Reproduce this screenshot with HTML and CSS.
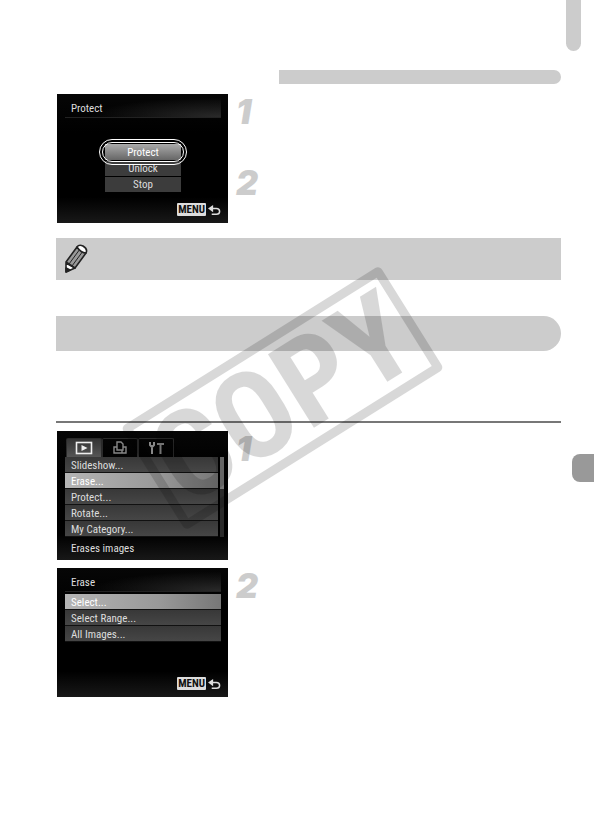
FILE: index.html
```
<!DOCTYPE html>
<html lang="en">
  <head>
    <meta charset="UTF-8" />
    <meta name="viewport" content="width=device-width, initial-scale=1.0" />
    <title>Protect and Erase</title>
    <link rel="stylesheet" href="styles.css">
  </head>
  <body>
    <div class="top-tab"></div>
    <main>
      <div class="section-bar"></div>

      <section class="step-row">
        <div class="screen">
          <h2 class="screen-title">Protect</h2>
          <div class="choices">
            <button class="choice selected">Protect</button>
            <button class="choice">Unlock</button>
            <button class="choice">Stop</button>
          </div>
          <div class="menu-key">
            <span class="key">MENU</span>
            <svg class="back" viewBox="0 0 14 12">
              <path class="head" d="M0 4.5 L5.5 0.5 V8.5 Z" />
              <path d="M4 4.5 H9 Q12.5 4.5 12.5 7.5 Q12.5 10.5 9 10.5 H4" />
            </svg>
          </div>
        </div>
        <ol class="steps">
          <li>1</li>
          <li>2</li>
        </ol>
      </section>

      <aside class="note">
        <svg class="pencil" viewBox="0 0 24 30">
          <path class="wood" d="M2 19 L2 28 L11 24 Z" />
          <path class="shaft" d="M2 18 L13 3 L22 9 L11 24 Z" />
          <path class="line" d="M5 20 L16 5 M8 22 L19 7" />
          <path class="cap" d="M13 3 Q15 0 19 2 Q24 5 22 9 Q17 9 13 3 Z" />
          <path class="lead" d="M2 24 L2 28 L6 26 Z" />
        </svg>
      </aside>

      <div class="chapter-bar"></div>
      <hr class="rule" />

      <section class="step-row">
        <div class="screen tabbed">
          <nav class="tabs">
            <button class="tab active" aria-label="Playback">
              <svg viewBox="0 0 18 14">
                <rect x="1.5" y="1.5" width="15" height="11" />
                <path class="fill" d="M6.5 4 L12.5 7 L6.5 10 Z" />
              </svg>
            </button>
            <button class="tab" aria-label="Print">
              <svg viewBox="0 0 18 14">
                <path d="M6 9 V1 H10 L12 3 V9 Z M6 6 H3 V12 H13 M12 6 H15 V12 H11 V9" />
              </svg>
            </button>
            <button class="tab" aria-label="Settings">
              <svg viewBox="0 0 18 14">
                <path class="tool" d="M3 1 V4 L5 6 L7 4 V1 M5 5 V13 M10 3 H17 M13.5 3 V13" />
              </svg>
            </button>
          </nav>
          <div class="list-area">
            <ul class="menu">
              <li><button>Slideshow...</button></li>
              <li><button class="selected">Erase...</button></li>
              <li><button>Protect...</button></li>
              <li><button>Rotate...</button></li>
              <li><button>My Category...</button></li>
            </ul>
            <div class="scroll"></div>
          </div>
          <p class="hint">Erases images</p>
        </div>
        <ol class="steps">
          <li>1</li>
        </ol>
      </section>

      <section class="step-row last">
        <div class="screen">
          <h2 class="screen-title">Erase</h2>
          <ul class="menu short">
            <li><button class="selected">Select...</button></li>
            <li><button>Select Range...</button></li>
            <li><button>All Images...</button></li>
          </ul>
          <div class="menu-key">
            <span class="key">MENU</span>
            <svg class="back" viewBox="0 0 14 12">
              <path class="head" d="M0 4.5 L5.5 0.5 V8.5 Z" />
              <path d="M4 4.5 H9 Q12.5 4.5 12.5 7.5 Q12.5 10.5 9 10.5 H4" />
            </svg>
          </div>
        </div>
        <ol class="steps">
          <li>2</li>
        </ol>
      </section>
    </main>
    <div class="side-tab"></div>
    <div class="stamp">COPY</div>
  </body>
</html>
```

FILE: styles.css
```
* {
  box-sizing: border-box;
}

body,
h2,
p,
ol,
ul {
  margin: 0;
  padding: 0;
}

ol,
ul {
  list-style: none;
}

body {
  position: relative;
  background: #fff;
  font-family: "Roboto Condensed", Roboto, Arial, sans-serif;
  overflow-x: hidden;
}

button {
  display: block;
  margin: 0;
  padding: 0;
  border: 0;
  background: none;
  color: inherit;
  font: inherit;
}

main {
  padding: 70px 33px 144px 56px;
}

/* page edge tabs */
.top-tab {
  position: absolute;
  top: 0;
  right: 13px;
  width: 15px;
  height: 51px;
  border-radius: 0 0 8px 8px;
  background: #ccc;
}

.side-tab {
  position: absolute;
  top: 454px;
  right: 0;
  width: 22px;
  height: 28px;
  border-radius: 8px 0 0 8px;
  background: #999;
}

.section-bar {
  height: 14px;
  margin: 0 0 10px 223px;
  border-radius: 0 7px 7px 0;
  background: #ccc;
}

.note {
  display: flex;
  align-items: center;
  height: 42px;
  margin: 15px 0 36px;
  padding-left: 8px;
  background: #ccc;
}

.pencil {
  width: 24px;
  height: 30px;
  stroke: #222;
  stroke-width: 1.6;
  stroke-linejoin: round;
}

.pencil .shaft {
  fill: #999;
}

.pencil .line {
  fill: none;
  stroke-width: 1;
}

.pencil .cap,
.pencil .wood {
  fill: #fff;
}

.pencil .lead {
  fill: #222;
}

.chapter-bar {
  height: 35px;
  border-radius: 0 18px 18px 0;
  background: #ccc;
}

.rule {
  height: 2px;
  margin: 70px 0 8px;
  border: 0;
  background: #777;
}

.step-row {
  display: flex;
  gap: 8px;
  padding-left: 1px;
}

.step-row.last {
  margin-top: 8px;
}

.steps {
  color: #ccc;
  font-family: Inter, "Liberation Sans", Arial, sans-serif;
  font-size: 34px;
  font-style: italic;
  font-weight: 900;
  line-height: 35px;
}

.steps li {
  height: 71px;
}

.steps li:last-child {
  height: auto;
}

/* camera screens */
.screen {
  display: flex;
  flex-direction: column;
  flex: none;
  width: 171px;
  height: 129px;
  padding: 0 7px 7px 8px;
  background: linear-gradient(#060606, #000 30%, #000 80%, #181818);
  color: #ddd;
  font-size: 11px;
  line-height: 17px;
}

.screen-title {
  height: 24px;
  margin-bottom: 2px;
  padding: 6px 6px 0;
  border-bottom: 1px solid #222;
  background: radial-gradient(ellipse at bottom right, #2a2a2a, transparent 60%);
  font-size: 11px;
  font-weight: normal;
}

.choices {
  width: 76px;
  margin: 24px auto 0;
}

.choice {
  position: relative;
  width: 100%;
  height: 15px;
  margin-bottom: 1px;
  background: #3c3c3c;
  line-height: 15px;
}

.choice.selected {
  z-index: 1;
  height: 16px;
  background: linear-gradient(#aaa, #666);
  color: #fff;
}

.choice.selected::after {
  content: "";
  position: absolute;
  inset: -5px -6px;
  border: 4px double #fff;
  border-radius: 13px;
}

.menu-key {
  display: flex;
  align-items: center;
  justify-content: flex-end;
  gap: 2px;
  margin-top: auto;
}

.key {
  height: 13px;
  padding: 0 1px;
  border-radius: 1px;
  background: #ddd;
  color: #111;
  font-size: 11px;
  font-weight: bold;
  line-height: 13px;
}

.back {
  width: 13px;
  height: 12px;
  fill: none;
  stroke: #ddd;
  stroke-width: 1.6;
}

.back .head {
  fill: #ddd;
  stroke: none;
}

.tabbed {
  padding: 7px 4px 0 8px;
}

.tabs {
  display: flex;
  height: 19px;
  padding-left: 1px;
}

.tab {
  display: flex;
  align-items: center;
  justify-content: center;
  width: 36px;
  border: 1px solid #2a2a2a;
  border-bottom: 0;
  border-radius: 2px 2px 0 0;
}

.tab.active {
  background: linear-gradient(#333, #555);
}

.tab svg {
  width: 18px;
  height: 14px;
  fill: none;
  stroke: #888;
  stroke-width: 1.4;
}

.tab.active svg {
  stroke: #eee;
  stroke-width: 1.6;
}

.tab .tool {
  stroke-width: 2;
}

.tab .fill {
  fill: #eee;
  stroke: none;
}

.list-area {
  display: flex;
  gap: 2px;
}

.menu {
  flex: 1;
}

.menu.short {
  flex: none;
}

.menu button {
  width: 100%;
  height: 16px;
  padding-left: 6px;
  border-bottom: 1px solid #111;
  background: linear-gradient(#383838, #464646);
  text-align: left;
}

.menu .selected {
  background: linear-gradient(90deg, #b4b4b4, #999 60%, #777);
  color: #fff;
}

.scroll {
  width: 4px;
  background: linear-gradient(#777 40%, #2a2a2a 40%);
}

.hint {
  margin-top: 3px;
  padding-left: 6px;
}

/* stamp across the page */
.stamp {
  position: absolute;
  top: 337px;
  left: 130px;
  width: 305px;
  height: 122px;
  border: 9px solid #000;
  border-radius: 5px;
  font-size: 122px;
  font-weight: bold;
  line-height: 106px;
  text-align: center;
  opacity: 0.15;
  transform: rotate(-32deg);
  pointer-events: none;
}
```
